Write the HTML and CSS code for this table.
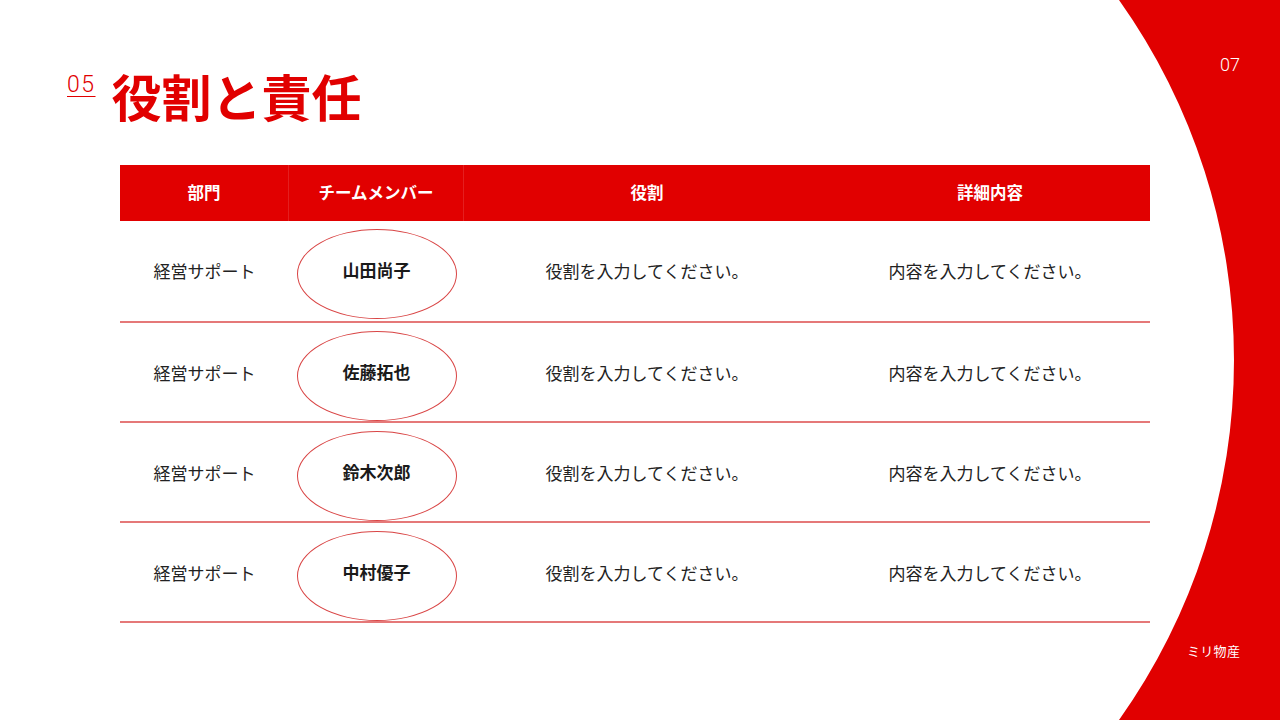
FILE: index.html
```html
<!DOCTYPE html>
<html lang="ja">
<head>
<meta charset="utf-8">
<title>役割と責任</title>
<link rel="stylesheet" href="styles.css">
</head>
<body>
<div class="slide">
  <svg class="deco" width="1280" height="720" viewBox="0 0 1280 720" aria-hidden="true">
    <path d="M1119 0 A621 621 0 0 1 1119 720 L1280 720 L1280 0 Z" fill="#e10000"/>
  </svg>
  <div class="page-num">07</div>
  <div class="company">ミリ物産</div>

  <div class="content">
    <div class="title-row">
      <span class="sec-num">05</span>
      <h1 class="title">役割と責任</h1>
    </div>

    <div class="table">
      <div class="row head">
        <div class="cell div">部門</div>
        <div class="cell div">チームメンバー</div>
        <div class="cell">役割</div>
        <div class="cell">詳細内容</div>
      </div>
      <div class="row body first">
        <div class="cell">経営サポート</div>
        <div class="cell"><div class="oval">山田尚子</div></div>
        <div class="cell">役割を入力してください。</div>
        <div class="cell">内容を入力してください。</div>
      </div>
      <div class="row body">
        <div class="cell">経営サポート</div>
        <div class="cell"><div class="oval">佐藤拓也</div></div>
        <div class="cell">役割を入力してください。</div>
        <div class="cell">内容を入力してください。</div>
      </div>
      <div class="row body">
        <div class="cell">経営サポート</div>
        <div class="cell"><div class="oval">鈴木次郎</div></div>
        <div class="cell">役割を入力してください。</div>
        <div class="cell">内容を入力してください。</div>
      </div>
      <div class="row body">
        <div class="cell">経営サポート</div>
        <div class="cell"><div class="oval">中村優子</div></div>
        <div class="cell">役割を入力してください。</div>
        <div class="cell">内容を入力してください。</div>
      </div>
    </div>
  </div>
</div>
</body>
</html>
```
FILE: styles.css
```css
* { box-sizing: border-box; }
html, body { margin: 0; padding: 0; }
body {
  background: #fff;
  font-family: "Noto Sans CJK JP", "Noto Sans", sans-serif;
}
.slide {
  position: relative;
  width: 1280px;
  height: 720px;
  overflow: hidden;
  background: #fff;
}
.deco {
  position: absolute;
  left: 0;
  top: 0;
}
.page-num {
  position: absolute;
  top: 54px;
  left: 1220px;
  color: #fff;
  font-family: Roboto, "Noto Sans", sans-serif;
  font-weight: 300;
  font-size: 18px;
  line-height: 22px;
}
.company {
  position: absolute;
  top: 642px;
  left: 1187px;
  color: #fff;
  font-size: 13px;
  line-height: 18px;
  letter-spacing: 0.3px;
}
.content {
  position: relative;
  padding-top: 70px;
}
.title-row {
  display: flex;
  align-items: flex-start;
  margin-left: 67px;
  gap: 16px;
}
.sec-num {
  margin-top: 3px;
  font-family: Roboto, "Noto Sans", sans-serif;
  font-weight: 300;
  font-size: 23px;
  line-height: 23px;
  letter-spacing: 1.5px;
  color: #e10000;
  text-decoration: underline;
  text-decoration-thickness: 1px;
  text-underline-offset: 4px;
}
.title {
  margin: 0;
  font-size: 50px;
  line-height: 50px;
  font-weight: 700;
  color: #e10000;
}
.table {
  margin: 45px 0 0 120px;
  width: 1030px;
}
.row {
  display: grid;
  grid-template-columns: 169px 175px 366px 320px;
}
.head {
  height: 56px;
  background: #e10000;
  color: #fff;
  font-weight: 700;
  font-size: 16.5px;
}
.head .cell {
  padding-bottom: 2px;
}
.head .cell.div {
  border-right: 1px solid rgba(255, 255, 255, 0.12);
}
.cell {
  display: flex;
  align-items: center;
  justify-content: center;
}
.body {
  height: 100px;
  border-bottom: 2px solid #e57878;
  color: #222;
  font-size: 17px;
}
.body .cell {
  padding-bottom: 2px;
}
.body.first { height: 102px; }
.body .cell .oval {
  width: 160px;
  height: 90px;
  margin-top: 8px;
  border: 1px solid #d94545;
  border-radius: 50%;
  display: flex;
  align-items: center;
  justify-content: center;
  padding-bottom: 10px;
  font-weight: 700;
  color: #1a1a1a;
}
```
